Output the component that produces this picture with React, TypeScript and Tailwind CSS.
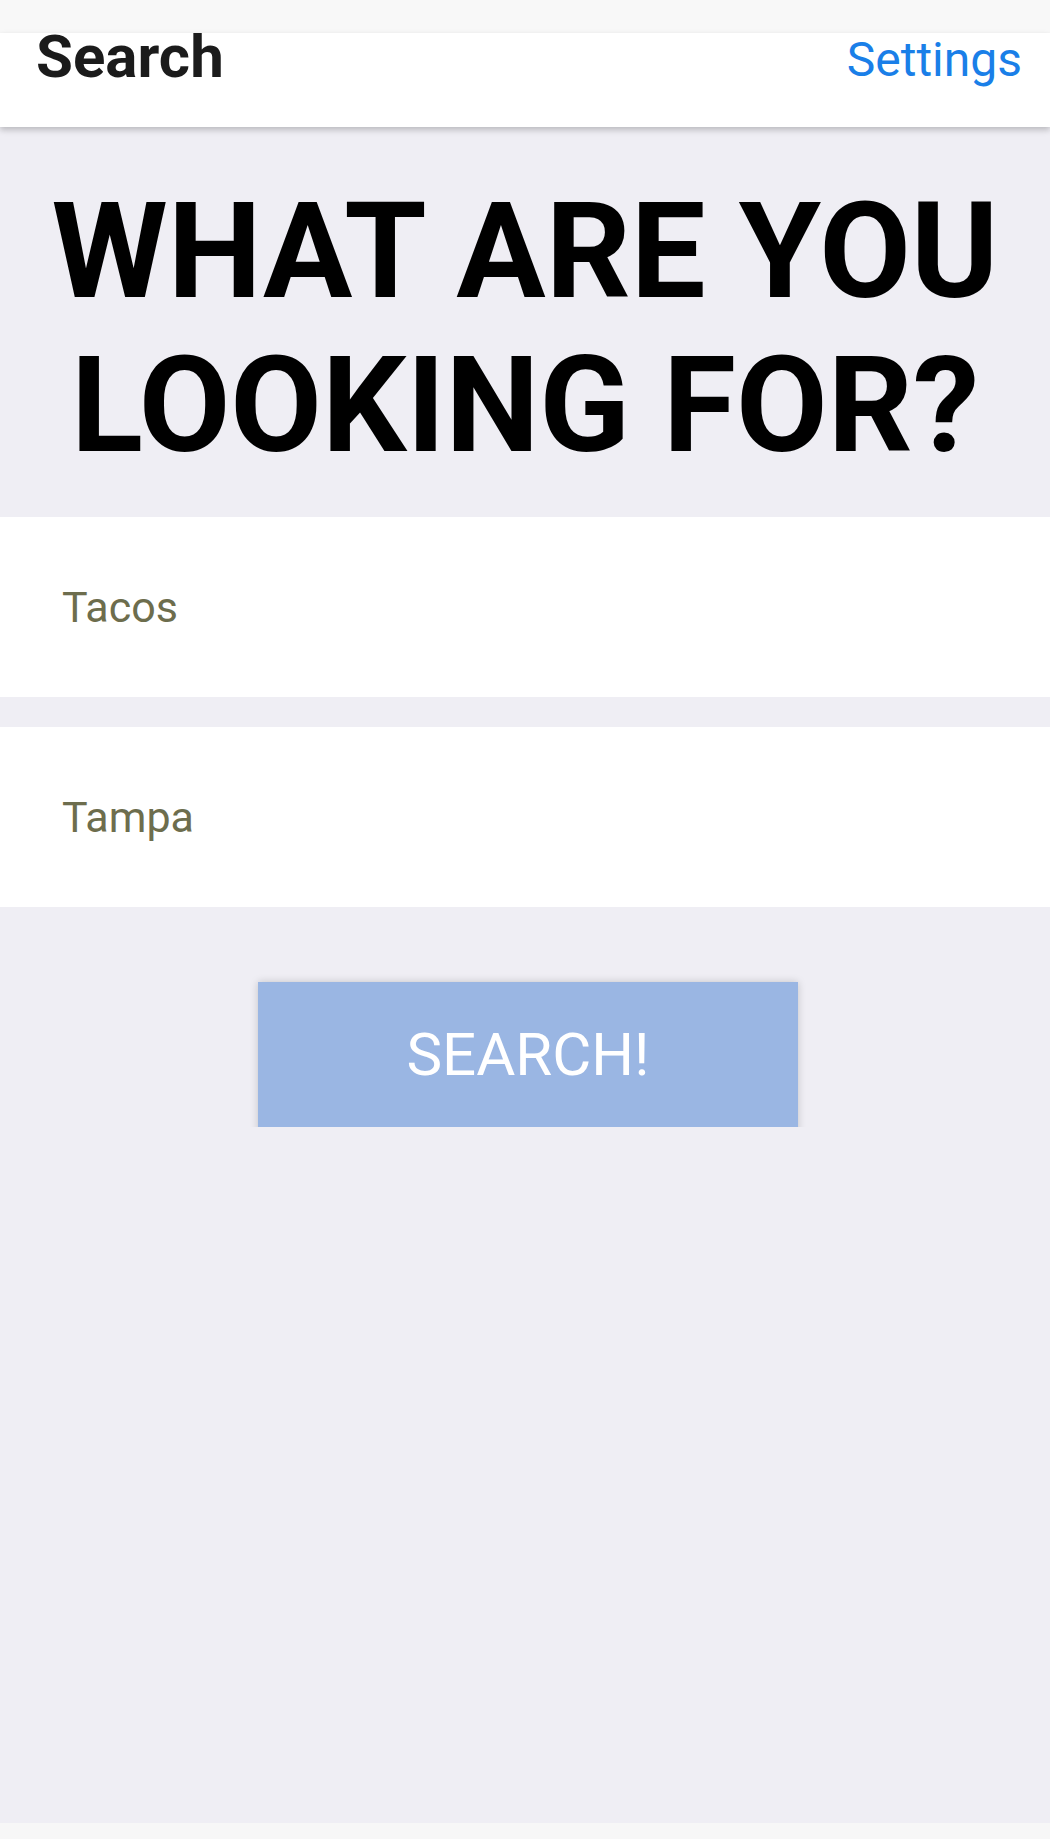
import React from 'react';

const App: React.FC = () => {
  return (
    <div className="h-[1839px] flex flex-col bg-[#efeef4] font-['Roboto',sans-serif] overflow-hidden">
      {/* status strip */}
      <div className="h-[33px] bg-[#f8f8f8] shrink-0"></div>

      {/* header */}
      <header className="relative z-10 h-[94px] shrink-0 bg-white flex items-start justify-between pl-[36px] pr-[28px] shadow-[0_3px_6px_rgba(0,0,0,0.22)]">
        <h1 className="text-[60px] leading-[47px] font-bold text-[#1b1b1b]">Search</h1>
        <button className="mt-[3px] text-[48px] leading-[48px] text-[#1a7fe8]">Settings</button>
      </header>

      {/* heading */}
      <div className="pt-[48px] pb-[34px] shrink-0">
        <h2 className="text-center text-[133px] leading-[154px] font-bold text-black">
          WHAT ARE YOU
          <br />
          LOOKING FOR?
        </h2>
      </div>

      {/* fields */}
      <div className="flex flex-col gap-[30px] shrink-0">
        <div className="h-[180px] bg-white flex items-center pl-[62px]">
          <span className="text-[43px] text-[#6d6d4d]">Tacos</span>
        </div>
        <div className="h-[180px] bg-white flex items-center pl-[62px]">
          <span className="text-[43px] text-[#6d6d4d]">Tampa</span>
        </div>
      </div>

      {/* button, clipped at the bottom like the original */}
      <div className="h-[220px] shrink-0 overflow-hidden flex justify-center pt-[75px] pl-[6px]">
        <button className="w-[540px] h-[170px] shrink-0 bg-[#9ab6e3] text-white text-[60px] pb-[25px] shadow-[0_0_8px_rgba(0,0,0,0.18)]">
          SEARCH!
        </button>
      </div>

      <div className="flex-1"></div>
      <div className="h-[16px] bg-[#f7f7f7] shrink-0"></div>
    </div>
  );
};

export default App;
